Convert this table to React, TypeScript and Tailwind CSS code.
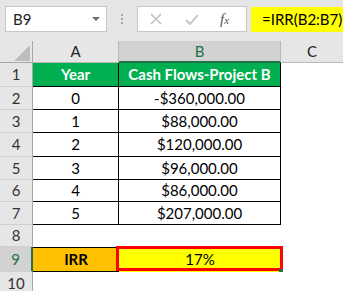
import React from "react";

const FONT = { fontFamily: "Lato, 'Noto Sans', sans-serif" };

const rows = [
  { n: 1, h: "h-[24px]", a: "Year", b: "Cash Flows-Project B", head: true },
  { n: 2, h: "h-[23px]", a: "0", b: "-$360,000.00" },
  { n: 3, h: "h-[23px]", a: "1", b: "$88,000.00" },
  { n: 4, h: "h-[24px]", a: "2", b: "$120,000.00" },
  { n: 5, h: "h-[23px]", a: "3", b: "$96,000.00" },
  { n: 6, h: "h-[22px]", a: "4", b: "$86,000.00" },
  { n: 7, h: "h-[23px]", a: "5", b: "$207,000.00" },
];

function RowHead({ n, selected }: { n: number; selected?: boolean }) {
  return (
    <div
      className={`w-[33px] shrink-0 flex items-center justify-center border-b border-b-[#cfcfcf] ${
        selected
          ? "bg-[#d2d2d2] text-[#217346] border-r-2 border-r-[#217346]"
          : "bg-[#e6e6e6] text-[#333] border-r border-r-[#a6a6a6]"
      }`}
    >
      {n}
    </div>
  );
}

export default function App() {
  return (
    <div className="w-[343px] h-[291px] overflow-hidden bg-white text-[15px] text-black" style={FONT}>
      {/* formula bar */}
      <div className="h-[41px] bg-[#e6e6e6] flex items-start pt-[6px] pl-[5px]">
        <div className="w-[102px] h-[26px] bg-white border border-[#c6c6c6] flex items-center justify-between pl-[7px] pr-[6px]">
          <span className="text-[#222]">B9</span>
          <svg width="8" height="5" viewBox="0 0 8 5">
            <path d="M0 0 H8 L4 4 Z" fill="#6f6f6f" />
          </svg>
        </div>
        <div className="w-[30px] h-[26px] flex flex-col items-center justify-center gap-[2px]">
          <div className="w-[2px] h-[2px] bg-[#a6a6a6]" />
          <div className="w-[2px] h-[2px] bg-[#a6a6a6]" />
          <div className="w-[2px] h-[2px] bg-[#a6a6a6]" />
        </div>
        <div className="w-[110px] h-[26px] bg-white border border-[#c6c6c6] flex items-center">
          <svg width="12" height="12" viewBox="0 0 12 12" className="ml-[12px]">
            <path d="M1 1 L11 11 M11 1 L1 11" stroke="#c2c2c2" strokeWidth="1.6" />
          </svg>
          <svg width="14" height="11" viewBox="0 0 14 11" className="ml-[23px]">
            <path d="M1 6 L5 10 L13 1" stroke="#c2c2c2" strokeWidth="1.8" fill="none" />
          </svg>
          <span
            className="ml-[21px] text-[#555] text-[15px] italic leading-none"
            style={{ fontFamily: "'Liberation Serif', serif" }}
          >
            f<span className="text-[11px]">x</span>
          </span>
        </div>
        <div className="ml-[4px] mt-[1px] flex-1 h-[25px] bg-[#ffff00] flex items-center pl-[11px]">
          =IRR(B2:B7)
        </div>
      </div>

      {/* column headers */}
      <div className="flex h-[22px]">
        <div className="w-[33px] shrink-0 bg-[#e6e6e6] border-r border-b border-[#a6a6a6] relative">
          <svg width="17" height="16" viewBox="0 0 17 16" className="absolute right-[1px] bottom-[1px]">
            <path d="M16 0 V16 H0 Z" fill="#bdbdbd" />
          </svg>
        </div>
        <div className="w-[86px] shrink-0 bg-[#e6e6e6] border-r border-b border-[#b8b8b8] flex items-center justify-center text-[#222]">
          A
        </div>
        <div className="w-[162px] shrink-0 bg-[#d2d2d2] border-r border-r-[#b8b8b8] border-b-2 border-b-[#217346] flex items-center justify-center text-[#217346]">
          B
        </div>
        <div className="flex-1 bg-[#e6e6e6] border-b border-[#b8b8b8] flex items-center justify-center text-[#222]">
          C
        </div>
      </div>

      {/* data rows */}
      {rows.map((r) => (
        <div key={r.n} className={`flex ${r.h}`}>
          <RowHead n={r.n} />
          <div
            className={`w-[86px] shrink-0 border-r border-b border-black flex items-center justify-center ${
              r.head ? "bg-[#00b050] text-white font-bold" : ""
            }`}
          >
            {r.a}
          </div>
          <div
            className={`w-[162px] shrink-0 border-r border-b border-black flex items-center justify-center ${
              r.head ? "bg-[#00b050] text-white font-bold" : ""
            }`}
          >
            {r.b}
          </div>
          <div className="flex-1" />
        </div>
      ))}

      <div className="flex h-[22px]">
        <RowHead n={8} />
        <div className="flex-1" />
      </div>

      <div className="flex h-[25px] relative">
        <RowHead n={9} selected />
        <div className="w-[86px] shrink-0 bg-[#ffc000] border-y border-black flex items-center justify-center font-bold">
          IRR
        </div>
        <div className="w-[162px] shrink-0 bg-[#ffff00] flex items-center justify-center">17%</div>
        <div className="flex-1" />
        <div className="absolute left-[116px] top-[-1px] w-[167px] h-[25px] border-[3px] border-[#ff0000]" />
        <div className="absolute left-[279px] top-[22px] w-[4px] h-[3px] bg-[#217346]" />
      </div>

      <div className="flex h-[24px]">
        <RowHead n={10} />
        <div className="flex-1" />
      </div>
    </div>
  );
}
